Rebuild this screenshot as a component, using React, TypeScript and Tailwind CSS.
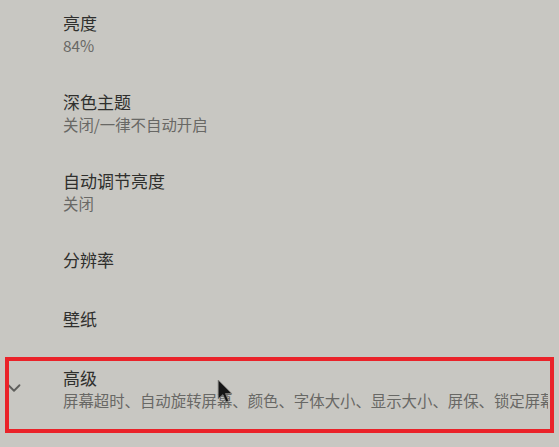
import React from 'react';
import { ChevronDown } from 'lucide-react';

interface SettingRowProps {
    title: string;
    summary?: string;
    expandable?: boolean;
}

const SettingRow: React.FC<SettingRowProps> = ({ title, summary, expandable = false }) => {
    return (
        <div className="flex items-center py-[17.5px]">
            <div className="w-[63px] shrink-0 flex items-center pl-[3px]">
                {expandable && <ChevronDown size={22} strokeWidth={2} className="text-[#5e5e5b]" />}
            </div>
            <div className="flex-1 min-w-0 overflow-hidden">
                <div className="text-[17px] leading-[24px] text-[#2f2f2d]">{title}</div>
                {summary && (
                    <div className="text-[15.4px] leading-[20px] text-[#686865] whitespace-nowrap">{summary}</div>
                )}
            </div>
        </div>
    );
};

const rows: SettingRowProps[] = [
    { title: '亮度', summary: '84%' },
    { title: '深色主题', summary: '关闭/一律不自动开启' },
    { title: '自动调节亮度', summary: '关闭' },
    { title: '分辨率' },
    { title: '壁纸' },
    {
        title: '高级',
        summary: '屏幕超时、自动旋转屏幕、颜色、字体大小、显示大小、屏保、锁定屏幕',
        expandable: true,
    },
];

export default function App() {
    return (
        <div
            className="relative w-[559px] h-[447px] overflow-hidden bg-[#c8c7c2]"
            style={{ fontFamily: '"Noto Sans CJK SC", "Noto Sans", sans-serif' }}
        >
            <div className="-mt-[6.5px] pr-[11px]">
                {rows.map((row) => (
                    <SettingRow key={row.title} {...row} />
                ))}
            </div>

            {/* highlight frame around the advanced row */}
            <div className="absolute left-[5px] top-[357px] w-[549px] h-[76px] border-[4px] border-[#ea2229]" />

            {/* mouse pointer */}
            <svg
                className="absolute left-[217px] top-[379px]"
                width="17"
                height="25"
                viewBox="0 0 16 24"
            >
                <path
                    d="M1 1 L1 19 L5.5 15 L8.5 22 L11 21 L8 14 L14 14 Z"
                    fill="#161616"
                    stroke="#7d7c78"
                    strokeWidth="0.8"
                    strokeLinejoin="round"
                />
            </svg>
        </div>
    );
}
